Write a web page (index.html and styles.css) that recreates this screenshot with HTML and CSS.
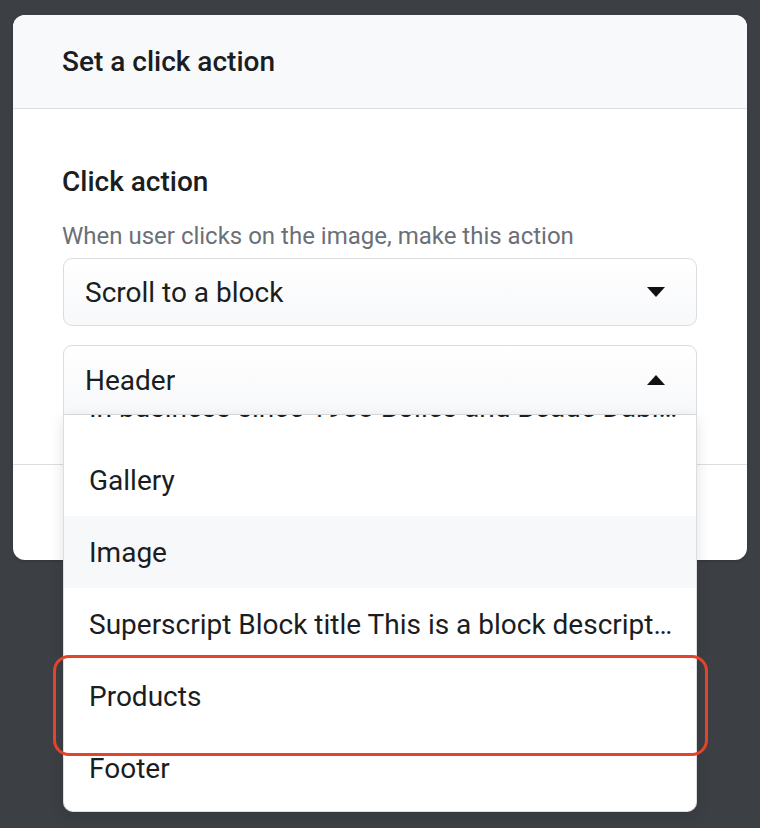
FILE: index.html
```html
<!DOCTYPE html>
<html>
<head>
<meta charset="utf-8">
<link rel="stylesheet" href="styles.css">
</head>
<body>
<div class="modal">
  <div class="modal-header"><h2 class="title">Set a click action</h2></div>
  <div class="modal-body">
    <div class="label">Click action</div>
    <div class="help">When user clicks on the image, make this action</div>
    <div class="select">
      <span>Scroll to a block</span>
      <svg class="caret" width="20" height="12" viewBox="0 0 20 12"><path d="M1 1h18L10 11z" fill="#111"/></svg>
    </div>
    <div class="select open">
      <span>Header</span>
      <svg class="caret" width="20" height="12" viewBox="0 0 20 12"><path d="M1 11h18L10 1z" fill="#111"/></svg>
    </div>
  </div>
  <div class="modal-footer"></div>
  <div class="menu">
    <div class="menu-list">
      <div class="item partial">In business since 1958 Bolles and Beade Dabl…</div>
      <div class="item">Gallery</div>
      <div class="item hover">Image</div>
      <div class="item">Superscript Block title This is a block descript…</div>
      <div class="item">Products</div>
      <div class="item">Footer</div>
    </div>
    <div class="highlight"></div>
  </div>
</div>
</body>
</html>
```

FILE: styles.css
```css
html, body {
  margin: 0;
  padding: 0;
}
body {
  background: #3c4045;
  height: 828px;
  overflow: hidden;
  font-family: Roboto, "Liberation Sans", sans-serif;
  color: #1a1d21;
  padding-top: 15px;
  box-sizing: border-box;
}
.modal {
  position: relative;
  margin: 0 13px;
  width: 734px;
  height: 545px;
  background: #fff;
  border-radius: 12px;
  display: flex;
  flex-direction: column;
  box-shadow: 0 1px 3px rgba(0,0,0,0.2);
}
.modal-header {
  height: 93px;
  flex: none;
  background: #f8f9fa;
  border-bottom: 1px solid #dcdde1;
  border-radius: 12px 12px 0 0;
  display: flex;
  align-items: center;
  padding-left: 49px;
}
.title {
  margin: 0;
  font-size: 28px;
  font-weight: 500;
  line-height: 32px;
}
.modal-body {
  height: 356px;
  flex: none;
  border-bottom: 1px solid #dcdde1;
  padding: 57px 50px 0;
  box-sizing: border-box;
}
.label {
  font-size: 28px;
  font-weight: 500;
  line-height: 32px;
  margin-left: -1px;
}
.help {
  margin-top: 24px;
  margin-left: -1px;
  font-size: 24px;
  line-height: 28px;
  color: #6b7078;
}
.select {
  margin-top: 8px;
  height: 68px;
  box-sizing: border-box;
  border: 1.5px solid #dcdde1;
  border-radius: 9px;
  background: linear-gradient(#ffffff, #f7f8fa);
  display: flex;
  align-items: center;
  justify-content: space-between;
  padding: 0 30px 0 21px;
  font-size: 28px;
  color: #1a1d21;
}
.select + .select {
  margin-top: 19px;
  height: 70px;
}
.select.open {
  border-radius: 9px 9px 0 0;
}
.caret {
  display: block;
}
.modal-footer {
  flex: 1;
}
.menu {
  position: absolute;
  left: 50px;
  top: 400px;
  width: 634px;
  height: 397px;
  box-sizing: border-box;
  background: #fff;
  border: 1.5px solid #dcdde1;
  border-top: none;
  border-radius: 0 0 10px 10px;
  box-shadow: 0 4px 14px rgba(0,0,0,0.12);
}
.menu-list {
  height: 100%;
  overflow: hidden;
  border-radius: 0 0 10px 10px;
}
.item {
  height: 72px;
  display: flex;
  align-items: center;
  padding-left: 25px;
  font-size: 28px;
  white-space: nowrap;
  overflow: hidden;
  color: #1a1d21;
}
.item.partial {
  height: 29px;
  align-items: flex-end;
  line-height: 72px;
}
.item.hover {
  background: #f7f8fa;
}
.highlight {
  position: absolute;
  left: -11px;
  top: 240px;
  width: 655px;
  height: 101px;
  box-sizing: border-box;
  border: 3px solid #e6432b;
  border-radius: 16px;
}
```
